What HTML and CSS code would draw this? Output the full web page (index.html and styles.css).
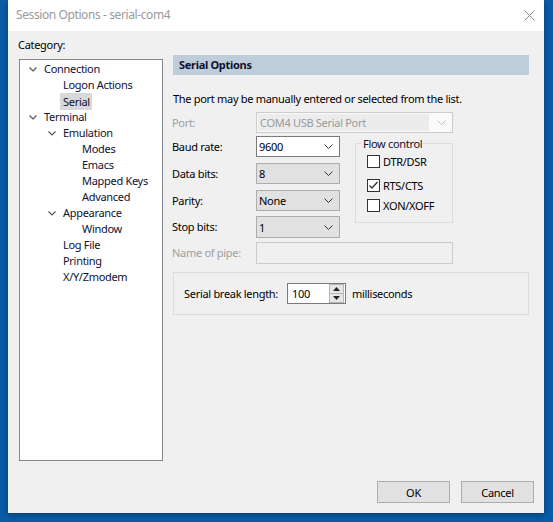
FILE: index.html
```html
<!DOCTYPE html>
<html lang="en">
  <head>
    <meta charset="UTF-8" />
    <title>Session Options - serial-com4</title>
    <link rel="stylesheet" href="styles.css">
  </head>
  <body>
    <div class="window">
      <div class="titlebar">
        <span class="title">Session Options - serial-com4</span>
        <svg class="close" width="11" height="11" viewBox="0 0 11 11">
          <path d="M0.5 0.5 L10.5 10.5 M10.5 0.5 L0.5 10.5" stroke="#8a8a8a" stroke-width="1" fill="none" />
        </svg>
      </div>

      <div class="client">
        <div class="main">
          <!-- category tree -->
          <div class="category">
            <div class="cat-label">Category:</div>
            <div class="tree">
              <div class="node lv0"><span class="twisty"><svg width="8" height="5" viewBox="0 0 8 5"><path d="M0.5 0.5 L4 4 L7.5 0.5" /></svg></span>Connection</div>
              <div class="node lv1"><span class="twisty"></span>Logon Actions</div>
              <div class="node lv1"><span class="twisty"></span><span class="selected">Serial</span></div>
              <div class="node lv0"><span class="twisty"><svg width="8" height="5" viewBox="0 0 8 5"><path d="M0.5 0.5 L4 4 L7.5 0.5" /></svg></span>Terminal</div>
              <div class="node lv1"><span class="twisty"><svg width="8" height="5" viewBox="0 0 8 5"><path d="M0.5 0.5 L4 4 L7.5 0.5" /></svg></span>Emulation</div>
              <div class="node lv2"><span class="twisty"></span>Modes</div>
              <div class="node lv2"><span class="twisty"></span>Emacs</div>
              <div class="node lv2"><span class="twisty"></span>Mapped Keys</div>
              <div class="node lv2"><span class="twisty"></span>Advanced</div>
              <div class="node lv1"><span class="twisty"><svg width="8" height="5" viewBox="0 0 8 5"><path d="M0.5 0.5 L4 4 L7.5 0.5" /></svg></span>Appearance</div>
              <div class="node lv2"><span class="twisty"></span>Window</div>
              <div class="node lv1"><span class="twisty"></span>Log File</div>
              <div class="node lv1"><span class="twisty"></span>Printing</div>
              <div class="node lv1"><span class="twisty"></span>X/Y/Zmodem</div>
            </div>
          </div>

          <!-- serial options page -->
          <div class="page">
            <div class="page-head">Serial Options</div>
            <div class="intro">The port may be manually entered or selected from the list.</div>

            <div class="form">
              <div class="lbl disabled r1">Port:</div>
              <div class="combo wide off r1">
                <span class="val">COM4 USB Serial Port</span>
                <svg class="arrow" width="9" height="5" viewBox="0 0 9 5"><path d="M0.5 0.5 L4.5 4.5 L8.5 0.5" /></svg>
              </div>

              <div class="lbl r2">Baud rate:</div>
              <div class="combo edit r2">
                <span class="val">9600</span>
                <svg class="arrow" width="9" height="5" viewBox="0 0 9 5"><path d="M0.5 0.5 L4.5 4.5 L8.5 0.5" /></svg>
              </div>

              <div class="lbl r3">Data bits:</div>
              <div class="combo r3">
                <span class="val">8</span>
                <svg class="arrow" width="9" height="5" viewBox="0 0 9 5"><path d="M0.5 0.5 L4.5 4.5 L8.5 0.5" /></svg>
              </div>

              <div class="lbl r4">Parity:</div>
              <div class="combo r4">
                <span class="val">None</span>
                <svg class="arrow" width="9" height="5" viewBox="0 0 9 5"><path d="M0.5 0.5 L4.5 4.5 L8.5 0.5" /></svg>
              </div>

              <div class="lbl r5">Stop bits:</div>
              <div class="combo r5 tall">
                <span class="val">1</span>
                <svg class="arrow" width="9" height="5" viewBox="0 0 9 5"><path d="M0.5 0.5 L4.5 4.5 L8.5 0.5" /></svg>
              </div>

              <fieldset class="flow">
                <legend>Flow control</legend>
                <div class="check first"><span class="box"></span>DTR/DSR</div>
                <div class="check second"><span class="box"><svg width="11" height="11" viewBox="0 0 11 11"><path d="M1.5 5.5 L4 8 L9.5 2" /></svg></span>RTS/CTS</div>
                <div class="check third"><span class="box"></span>XON/XOFF</div>
              </fieldset>

              <div class="lbl disabled r6">Name of pipe:</div>
              <div class="textbox off r6"></div>
            </div>

            <div class="break-group">
              <span>Serial break length:</span>
              <div class="spin">
                <span class="spin-val">100</span>
                <div class="spin-btns">
                  <div class="spin-btn"><svg width="7" height="4" viewBox="0 0 7 4"><path d="M0 4 L3.5 0 L7 4 Z" /></svg></div>
                  <div class="spin-btn"><svg width="7" height="4" viewBox="0 0 7 4"><path d="M0 0 L3.5 4 L7 0 Z" /></svg></div>
                </div>
              </div>
              <span class="unit">milliseconds</span>
            </div>
          </div>
        </div>

        <div class="buttons">
          <button class="btn">OK</button>
          <button class="btn">Cancel</button>
        </div>
      </div>
    </div>
  </body>
</html>
```

FILE: styles.css
```css
body {
  margin: 0;
  background: #0a5ca8;
  font-family: "Noto Sans", "Open Sans", sans-serif;
  font-size: 11px;
  letter-spacing: -0.3px;
  color: #000;
  height: 522px;
  overflow: hidden;
}
.window {
  width: 536px;
  height: 513px;
  margin-left: 8px;
  background: #f0f0f0;
  box-shadow: 0 2px 6px rgba(0, 0, 0, 0.35);
  display: flex;
  flex-direction: column;
}
.titlebar {
  height: 31px;
  background: #fff;
  display: flex;
  align-items: center;
  justify-content: space-between;
  padding: 0 9px 0 8px;
}
.title {
  font-size: 12px;
  letter-spacing: -0.4px;
  color: #9a9a9a;
  margin-top: -2px;
}
.close {
  margin-top: -1px;
}
.client {
  flex: 1;
  display: flex;
  flex-direction: column;
  padding: 6px 0 0 10px;
}
.main {
  display: flex;
  align-items: flex-start;
  flex: 1;
}

/* tree */
.category {
  width: 145px;
}
.cat-label {
  line-height: 15px;
  margin-bottom: 7px;
}
.tree {
  margin-left: 1px;
  width: 142px;
  height: 399px;
  border: 1px solid #828790;
  background: #fff;
  padding-top: 1px;
  box-sizing: content-box;
}
.node {
  height: 16px;
  line-height: 16px;
  display: flex;
  align-items: center;
  color: #101030;
  white-space: nowrap;
}
.lv0 { padding-left: 5px; }
.lv1 { padding-left: 24px; }
.lv2 { padding-left: 43px; }
.twisty {
  width: 19px;
  flex: none;
  display: flex;
  align-items: center;
  padding-left: 4px;
  box-sizing: border-box;
}
.twisty svg path {
  stroke: #555;
  stroke-width: 1.2;
  fill: none;
}
.selected {
  background: #d9d9d9;
  margin-left: -3px;
  padding: 0 2px 0 3px;
  line-height: 17px;
}

/* page */
.page {
  margin-left: 10px;
  margin-top: 18px;
  width: 356px;
}
.page-head {
  height: 20px;
  line-height: 20px;
  background: #bfcddb;
  padding-left: 6px;
  font-weight: bold;
  color: #10102a;
}
.intro {
  margin-top: 16px;
  line-height: 15px;
}
.form {
  margin-top: 6px;
  display: grid;
  grid-template-columns: 83px 84px 15px 98px;
  grid-template-rows: 24px 27px 27px 26px 26px 22px;
}
.lbl {
  grid-column: 1;
  height: 21px;
  display: flex;
  align-items: center;
  margin-left: -1px;
}
.disabled {
  color: #a0a0a0;
}
.r1 { grid-row: 1; }
.r2 { grid-row: 2; }
.r3 { grid-row: 3; }
.r4 { grid-row: 4; }
.r5 { grid-row: 5; }
.r6 { grid-row: 6; }

.combo {
  grid-column: 2;
  height: 21px;
  box-sizing: border-box;
  border: 1px solid #adadad;
  background: #e1e1e1;
  display: flex;
  align-items: center;
  justify-content: space-between;
  padding: 0 6px 0 2px;
}
.combo.tall {
  height: 22px;
}
.combo.edit {
  background: #fff;
  border-color: #7a7a7a;
}
.combo.wide {
  grid-column: 2 / 5;
}
.combo.off {
  background: #fafafa;
  border-color: #cccccc;
  padding: 1px 6px 1px 1px;
  align-items: stretch;
}
.combo.off .val {
  flex: 1;
  background: #ececec;
  color: #9a9a9a;
  display: flex;
  align-items: center;
  padding-left: 2px;
  margin-right: 8px;
}
.combo.off .arrow {
  align-self: center;
}
.combo.off .arrow path {
  stroke: #c0c0c0;
}
.arrow path {
  stroke: #333;
  stroke-width: 1;
  fill: none;
}
.textbox {
  grid-column: 2 / 5;
  height: 22px;
  box-sizing: border-box;
  border: 1px solid #cccccc;
  background: #f0f0f0;
}

/* flow control group */
.flow {
  grid-column: 4;
  grid-row: 2 / 6;
  margin: 0;
  padding: 0 0 9px 11px;
  border: 1px solid #dcdcdc;
  align-self: start;
  min-width: 0;
}
.flow legend {
  margin-left: -5px;
  padding: 0 1px;
  line-height: 15px;
  color: #10102a;
}
.check {
  height: 16px;
  display: flex;
  align-items: center;
}
.check.first { margin-top: 2px; }
.check.second { margin-top: 8px; }
.check.third { margin-top: 4px; }
.box {
  width: 13px;
  height: 13px;
  box-sizing: border-box;
  border: 1px solid #333;
  background: #fff;
  margin-right: 3px;
  display: flex;
  align-items: center;
  justify-content: center;
}
.box svg path {
  stroke: #333;
  stroke-width: 1.3;
  fill: none;
}

/* serial break group */
.break-group {
  margin-top: 8px;
  height: 43px;
  box-sizing: border-box;
  border: 1px solid #dcdcdc;
  display: flex;
  align-items: center;
  padding-left: 10px;
}
.spin {
  margin-left: 9px;
  width: 59px;
  height: 21px;
  box-sizing: border-box;
  border: 1px solid #7a7a7a;
  background: #fff;
  display: flex;
  align-items: center;
}
.spin-val {
  flex: 1;
  padding-left: 4px;
}
.spin-btns {
  width: 15px;
  height: 19px;
  display: flex;
  flex-direction: column;
  margin-right: 1px;
}
.spin-btn {
  flex: 1;
  background: #e6e6e6;
  border: 1px solid #b5b5b5;
  display: flex;
  align-items: center;
  justify-content: center;
}
.spin-btn + .spin-btn {
  border-top: none;
}
.spin-btn path {
  fill: #222;
}
.unit {
  margin-left: 6px;
}

/* footer */
.buttons {
  display: flex;
  justify-content: flex-end;
  gap: 11px;
  padding: 0 10px 10px 0;
}
.btn {
  width: 73px;
  height: 22px;
  background: #e1e1e1;
  border: 1px solid #adadad;
  font-family: inherit;
  font-size: 11px;
  letter-spacing: -0.3px;
  color: #000;
  padding: 0;
}
```
